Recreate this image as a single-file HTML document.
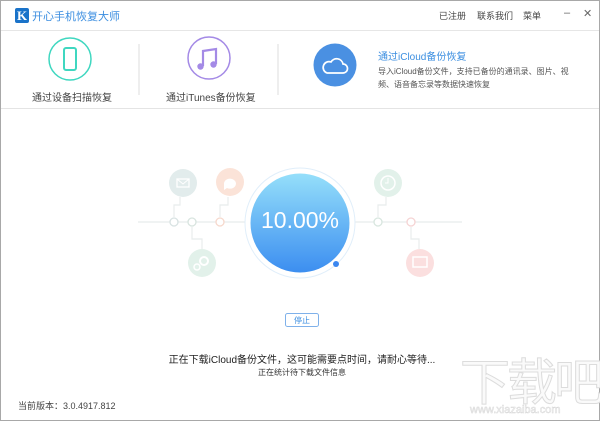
<!DOCTYPE html><html><head><meta charset="utf-8"><style>
*{margin:0;padding:0;box-sizing:border-box}
body{width:600px;height:421px;overflow:hidden;background:#fff;font-family:"Liberation Sans","Noto Sans CJK SC",sans-serif;position:relative;color:#333}
.win{position:absolute;left:0;top:0;width:600px;height:421px;border:1px solid #a8a8a8}
.a{position:absolute;white-space:nowrap}
</style></head><body><div class="win"></div>
<div class="a" style="left:15px;top:8px;width:14px;height:15px;background:#1a73c9;border-radius:2px;color:#fff;font:bold 13px 'Liberation Serif',serif;text-align:center;line-height:15px">K</div>
<div class="a" style="left:32px;top:8px;font-size:11px;color:#3b8ee0">开心手机恢复大师</div>
<div class="a" style="left:439px;top:9px;font-size:9px;color:#444">已注册</div>
<div class="a" style="left:477px;top:9px;font-size:9px;color:#444">联系我们</div>
<div class="a" style="left:523px;top:9px;font-size:9px;color:#444">菜单</div>
<div class="a" style="left:564px;top:7px;font-size:11px;color:#666">–</div>
<div class="a" style="left:583px;top:7px;font-size:11px;color:#666">✕</div>
<div class="a" style="left:1px;top:30px;width:598px;height:1px;background:#e6e6e6"></div>
<div class="a" style="left:1px;top:108px;width:598px;height:1px;background:#e4e4e4"></div>
<svg class="a" style="left:0;top:0" width="600" height="421">
<circle cx="70" cy="59" r="21" fill="none" stroke="#3fd7c0" stroke-width="1.5"/>
<rect x="64" y="48" width="12" height="22" rx="2" fill="none" stroke="#3fd7c0" stroke-width="2"/>
<circle cx="209" cy="58" r="21" fill="none" stroke="#a48ae6" stroke-width="1.5"/>
<path d="M203 66V51l13-2v15" fill="none" stroke="#a48ae6" stroke-width="2.2"/>
<circle cx="200.5" cy="66.5" r="3.2" fill="#a48ae6"/><circle cx="213.5" cy="64.5" r="3.2" fill="#a48ae6"/>
<line x1="139" y1="44" x2="139" y2="95" stroke="#ddd"/><line x1="278" y1="44" x2="278" y2="95" stroke="#ddd"/>
<circle cx="335" cy="65" r="21.5" fill="#4a90e2"/>
<path d="M327 73h16a4.5 4.5 0 0 0 0-9 6.5 6.5 0 0 0-12-2 4.5 4.5 0 0 0-4 11z" fill="none" stroke="#fff" stroke-width="1.7"/>
<g stroke="#e8ecec" stroke-width="1.2" fill="none">
<line x1="138" y1="222" x2="250" y2="222"/><line x1="350" y1="222" x2="462" y2="222"/>
<path d="M174 217v-12h6v-8M220 217v-12h8v-8M192 227v12h10v10M378 217v-12h8v-8M411 227v12h8v10"/>
</g>
<g fill="#fff" stroke-width="1.3"><circle cx="174" cy="222" r="4" stroke="#d8e2e2"/><circle cx="192" cy="222" r="4" stroke="#d8e4df"/><circle cx="220" cy="222" r="4" stroke="#f6d8cc"/><circle cx="378" cy="222" r="4" stroke="#d8e6df"/><circle cx="411" cy="222" r="4" stroke="#f5d3d3"/></g>
<circle cx="183" cy="183" r="14" fill="#e2ecec"/><circle cx="230" cy="182" r="14" fill="#fbe3d8"/><circle cx="202" cy="263" r="14" fill="#e2f1ea"/><circle cx="388" cy="183" r="14" fill="#e2f1ea"/><circle cx="420" cy="263" r="14" fill="#fbdfdf"/>
<rect x="177" y="179" width="12" height="8" fill="none" stroke="#fff" stroke-width="1.3"/><path d="M177 179l6 5 6-5" stroke="#fff" fill="none"/>
<circle cx="388" cy="183" r="7" fill="none" stroke="#fff" stroke-width="1.5"/><path d="M388 178v5h-3" stroke="#fff" fill="none"/>
<rect x="413" y="257" width="14" height="10" fill="none" stroke="#fff" stroke-width="1.5"/>
<circle cx="204" cy="261" r="4" fill="none" stroke="#fff" stroke-width="2"/><circle cx="197" cy="267" r="3" fill="none" stroke="#fff" stroke-width="1.5"/>
<path d="M224 184a6 5 0 1 1 3 4l-3 2z" fill="#fff"/>
<defs><linearGradient id="g" x1="0" y1="0" x2="0" y2="1"><stop offset="0" stop-color="#95dffa"/><stop offset="1" stop-color="#3c8ef0"/></linearGradient></defs>
<circle cx="300" cy="223" r="55" fill="#fff" stroke="#e0eefa"/>
<circle cx="300" cy="223" r="49.5" fill="url(#g)"/>
<circle cx="336" cy="264" r="3" fill="#3a86f0"/>
<rect x="285.5" y="313.5" width="33" height="13" rx="2" fill="#fff" stroke="#7fb1ea"/>
</svg>
<div class="a" style="left:250px;top:207px;width:100px;text-align:center;font-size:23px;color:#fff">10.00%</div>
<div class="a" style="left:32px;top:89px;font-size:10px;color:#444">通过设备扫描恢复</div>
<div class="a" style="left:166px;top:89px;font-size:10px;color:#444">通过iTunes备份恢复</div>
<div class="a" style="left:378px;top:48px;font-size:10px;color:#3b8ee0">通过iCloud备份恢复</div>
<div class="a" style="left:378px;top:65px;font-size:8px;color:#555;line-height:13px">导入iCloud备份文件，支持已备份的通讯录、图片、视<br>频、语音备忘录等数据快速恢复</div>
<div class="a" style="left:285px;top:315px;width:34px;text-align:center;font-size:8px;color:#3b8ee0">停止</div>
<div class="a" style="left:150px;top:351px;width:304px;text-align:center;font-size:10px;color:#222">正在下载iCloud备份文件，这可能需要点时间，请耐心等待...</div>
<div class="a" style="left:150px;top:367px;width:304px;text-align:center;font-size:8px;color:#333">正在统计待下载文件信息</div>
<div class="a" style="left:18px;top:399px;font-size:9px;color:#444">当前版本：3.0.4917.812</div>
<div class="a" style="left:460px;top:343px;font-size:50px;color:#fafafa;-webkit-text-stroke:1px #dcdcdc;letter-spacing:-3px">下载吧</div>
<div class="a" style="left:470px;top:404px;font-size:11px;color:#fafafa;-webkit-text-stroke:0.5px #d8d8d8">www.xiazaiba.com</div>
</body></html>
